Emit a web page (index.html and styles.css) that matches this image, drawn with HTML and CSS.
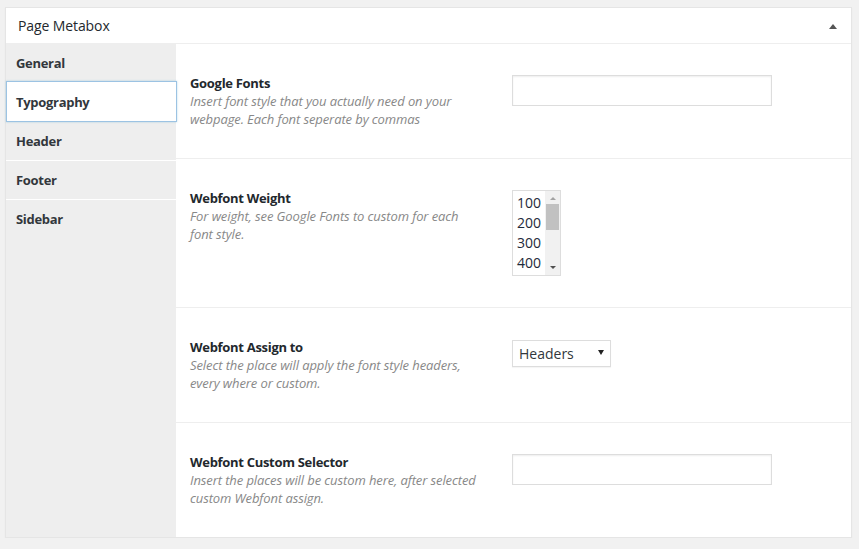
FILE: index.html
```html
<!DOCTYPE html>
<html lang="en">
<head>
    <meta charset="UTF-8">
    <meta name="viewport" content="width=device-width, initial-scale=1.0">
    <title>Page Metabox</title>
    <link rel="stylesheet" href="styles.css">
</head>
<body>
    <div class="metabox">
        <div class="metabox-head">
            <h2>Page Metabox</h2>
            <span class="toggle"></span>
        </div>

        <div class="metabox-body">
            <ul class="tabs">
                <li>General</li>
                <li class="active">Typography</li>
                <li>Header</li>
                <li>Footer</li>
                <li>Sidebar</li>
            </ul>

            <div class="panel">
                <div class="field">
                    <div class="field-info">
                        <label for="googleFonts">Google Fonts</label>
                        <p>Insert font style that you actually need on your webpage. Each font seperate by commas</p>
                    </div>
                    <div class="field-input">
                        <input type="text" id="googleFonts" class="text-input">
                    </div>
                </div>

                <div class="field">
                    <div class="field-info">
                        <label>Webfont Weight</label>
                        <p>For weight, see Google Fonts to custom for each font style.</p>
                    </div>
                    <div class="field-input">
                        <div class="listbox" role="listbox">
                            <ul class="listbox-items">
                                <li>100</li>
                                <li>200</li>
                                <li>300</li>
                                <li>400</li>
                            </ul>
                            <div class="scrollbar">
                                <span class="arrow-up"></span>
                                <span class="thumb"></span>
                                <span class="arrow-down"></span>
                            </div>
                        </div>
                    </div>
                </div>

                <div class="field">
                    <div class="field-info">
                        <label for="assign">Webfont Assign to</label>
                        <p>Select the place will apply the font style headers, every where or custom.</p>
                    </div>
                    <div class="field-input">
                        <div class="dropdown">
                            <select id="assign">
                                <option>Headers</option>
                                <option>Everywhere</option>
                                <option>Custom</option>
                            </select>
                        </div>
                    </div>
                </div>

                <div class="field">
                    <div class="field-info">
                        <label for="customSelector">Webfont Custom Selector</label>
                        <p>Insert the places will be custom here, after selected custom Webfont assign.</p>
                    </div>
                    <div class="field-input">
                        <input type="text" id="customSelector" class="text-input">
                    </div>
                </div>
            </div>
        </div>
    </div>
</body>
</html>
```

FILE: styles.css
```css
body {
    margin: 0;
    padding: 7px 0 0 5px;
    background-color: #f1f1f1;
    font-family: "Open Sans", "Noto Sans", sans-serif;
    font-size: 13px;
    color: #23282d;
}

.metabox {
    width: 845px;
    background-color: #fff;
    border: 1px solid #e5e5e5;
    box-shadow: 0 1px 1px rgba(0, 0, 0, 0.05);
}

.metabox-head {
    display: flex;
    align-items: center;
    justify-content: space-between;
    height: 35px;
    padding: 0 14px 0 12px;
    border-bottom: 1px solid #eee;
}

.metabox-head h2 {
    margin: 0;
    font-size: 14px;
    font-weight: normal;
    letter-spacing: -0.1px;
}

.toggle {
    width: 0;
    height: 0;
    margin-top: 1px;
    border-left: 4px solid transparent;
    border-right: 4px solid transparent;
    border-bottom: 5px solid #555;
}

.metabox-body {
    display: flex;
}

.tabs {
    width: 170px;
    margin: 0;
    padding: 0;
    list-style: none;
    background-color: #eee;
}

.tabs li {
    height: 38px;
    line-height: 38px;
    padding-left: 10px;
    font-weight: bold;
    letter-spacing: -0.3px;
    color: #32373c;
}

.tabs li + li {
    border-top: 1px solid #fff;
}

.tabs li.active {
    position: relative;
    margin-top: -1px;
    margin-right: -1px;
    padding-left: 9px;
    height: 39px;
    line-height: 41px;
    background-color: #fff;
    border: 1px solid #9cc3e3;
    box-shadow: 0 0 2px rgba(30, 140, 190, 0.3);
}

.tabs li.active + li {
    border-top: none;
}

.panel {
    flex: 1;
}

.field {
    display: grid;
    grid-template-columns: 290px 260px;
    column-gap: 32px;
    padding: 30px 14px;
    border-bottom: 1px solid #eee;
}

.field:last-child {
    border-bottom: none;
}

.field-info label {
    display: block;
    line-height: 18px;
    font-weight: bold;
    letter-spacing: -0.3px;
    color: #23282d;
}

.field-info p {
    margin: 0;
    line-height: 18px;
    font-style: italic;
    letter-spacing: -0.1px;
    color: #888;
}

.field-input {
    padding-top: 1px;
}

.text-input {
    display: block;
    width: 260px;
    height: 31px;
    margin: 0;
    border: 1px solid #ddd;
    box-shadow: inset 0 1px 2px rgba(0, 0, 0, 0.07);
    box-sizing: border-box;
    font-family: inherit;
}

.listbox {
    display: flex;
    width: 49px;
    height: 86px;
    margin-bottom: 1px;
    border: 1px solid #ddd;
    box-sizing: border-box;
}

.listbox-items {
    flex: 1;
    margin: 0;
    padding: 2px 0 0 4px;
    list-style: none;
    font-size: 14px;
    line-height: 20px;
    color: #1e2a3a;
}

.scrollbar {
    display: flex;
    flex-direction: column;
    align-items: center;
    width: 15px;
    background-color: #f1f1f1;
}

.arrow-up,
.arrow-down {
    width: 0;
    height: 0;
    border-left: 3px solid transparent;
    border-right: 3px solid transparent;
}

.arrow-up {
    margin: 6px 0 4px;
    border-bottom: 3px solid #a3a3a3;
}

.arrow-down {
    margin: auto 0 6px;
    border-top: 3px solid #505050;
}

.thumb {
    width: 13px;
    height: 26px;
    background-color: #c1c1c1;
}

.dropdown {
    position: relative;
    width: 99px;
    margin-top: 1px;
}

.dropdown select {
    display: block;
    width: 99px;
    height: 27px;
    padding: 0 0 0 6px;
    border: 1px solid #ddd;
    border-radius: 0;
    background-color: #fff;
    box-shadow: 0 1px 1px rgba(0, 0, 0, 0.04);
    appearance: none;
    font-family: inherit;
    font-size: 14px;
    color: #32373c;
}

.dropdown::after {
    content: "";
    position: absolute;
    right: 7px;
    top: 10px;
    border-left: 3px solid transparent;
    border-right: 3px solid transparent;
    border-top: 5px solid #222;
}
```
